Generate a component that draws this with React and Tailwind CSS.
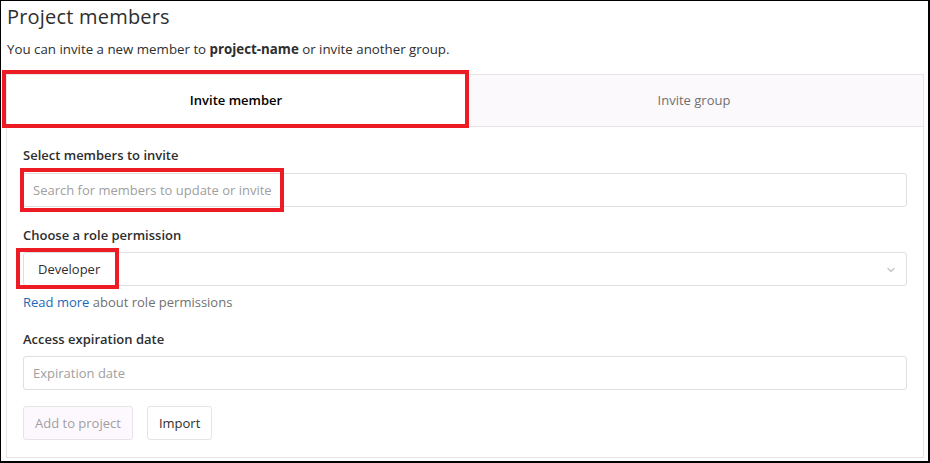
import React from 'react';
import { ChevronDown } from 'lucide-react';

const Label = ({ children, className = '' }) => (
  <label className={`block text-[13px] leading-[20px] font-semibold text-[#2e2e2e] ${className}`}>{children}</label>
);

const Field = ({ placeholder, value, children }) => (
  <div className="relative flex items-center h-[34px] pt-[2px] border border-[#dfdfdf] rounded-[3px] bg-white px-[9px] text-[13px]">
    {value ? <span className="text-[#2e2e2e] pl-[5px]">{value}</span> : <span className="text-[#a0a0a0]">{placeholder}</span>}
    {children}
  </div>
);

const App = () => {
  return (
    <div className="relative w-[930px] h-[463px] overflow-hidden bg-white border-t border-l border-r-2 border-b-2 border-black font-['Open_Sans',sans-serif] text-[#2e2e2e]">
      {/* ── Header ── */}
      <h1 className="pl-[6px] pt-[2px] text-[20px] leading-[28px] font-normal tracking-[0.2px]">Project members</h1>
      <p className="pl-[6px] mt-[8px] text-[13.3px] leading-[20px]">
        You can invite a new member to <strong className="font-bold">project-name</strong> or invite another group.
      </p>

      {/* ── Panel ── */}
      <div className="ml-[5px] mr-[4px] mt-[15px] border border-[#e5e5e5]">
        <div className="grid grid-cols-2 h-[52px] border-b border-[#e5e5e5] text-[13px]">
          <div className="flex items-center justify-center bg-white font-semibold text-black">Invite member</div>
          <div className="flex items-center justify-center bg-[#fcf9fc] text-[#707070]">Invite group</div>
        </div>

        <div className="px-4 pt-[18px] pb-[17px]">
          <Label className="mb-[8px]">Select members to invite</Label>
          <Field placeholder="Search for members to update or invite" />

          <Label className="mt-[18px] mb-[7px]">Choose a role permission</Label>
          <Field value="Developer">
            <ChevronDown size={12} strokeWidth={3} className="absolute right-[9px] text-[#c8c8c8]" />
          </Field>
          <p className="mt-[7px] text-[13px] leading-[18px] text-[#707070]">
            <a className="text-[#1b69b6]">Read more</a> about role permissions
          </p>

          <Label className="mt-[18px] mb-[7px]">Access expiration date</Label>
          <Field placeholder="Expiration date" />

          <div className="flex gap-[14px] mt-[16px]">
            <button className="h-[34px] pt-[2px] px-[11px] rounded-[3px] border border-[#e5e5e5] bg-[#fdf8fd] text-[13px] text-[#a0a0a0]">Add to project</button>
            <button className="h-[34px] pt-[2px] px-[11px] rounded-[3px] border border-[#e5e5e5] bg-white text-[13px] text-[#2e2e2e]">Import</button>
          </div>
        </div>
      </div>

      {/* ── Highlight boxes ── */}
      <div className="absolute left-[1px] top-[69px] w-[467px] h-[58px] border-[4px] border-[#ed1c24] pointer-events-none" />
      <div className="absolute left-[19px] top-[167px] w-[264px] h-[44px] border-[4px] border-[#ed1c24] pointer-events-none" />
      <div className="absolute left-[15px] top-[247px] w-[103px] h-[41px] border-[4px] border-[#ed1c24] pointer-events-none" />
    </div>
  );
};

export default App;
